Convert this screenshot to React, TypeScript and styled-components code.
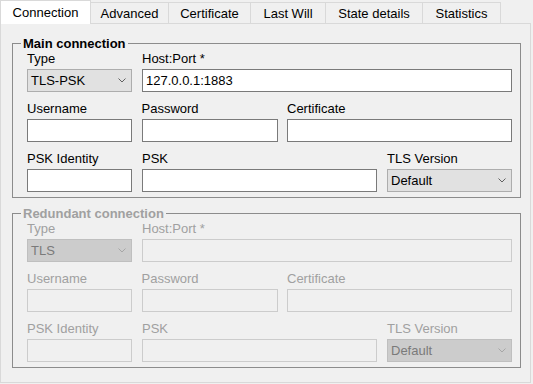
import styled, { createGlobalStyle, css } from 'styled-components';

const Global = createGlobalStyle`
  html, body {
    margin: 0;
    background: #f0f0f0;
  }
  body {
    font-family: "Liberation Sans", Arial, sans-serif;
    font-size: 13px;
    color: #000;
  }
`;

const Window = styled.div`
  width: 533px;
  height: 384px;
  display: flex;
  flex-direction: column;
  box-sizing: border-box;
  padding-bottom: 1px;
`;

const TabStrip = styled.div`
  display: flex;
  align-items: flex-end;
  height: 23px;
`;

const Tab = styled.div<{ $active?: boolean; $w: number }>`
  box-sizing: border-box;
  width: ${(p) => p.$w}px;
  height: 21px;
  padding-top: 2px;
  line-height: 18px;
  text-align: center;
  border: 1px solid #d9d9d9;
  border-bottom: none;
  background: #f0f0f0;
  white-space: nowrap;
  & + & {
    margin-left: -1px;
  }
  ${(p) =>
    p.$active &&
    css`
      height: 24px;
      margin-bottom: -1px;
      padding-top: 3px;
      background: #fff;
      position: relative;
      z-index: 1;
    `}
`;

const Panel = styled.div`
  flex: 1;
  margin-right: 2px;
  border: 1px solid #d9d9d9;
  padding: 12px 9px 0 11px;
  display: flex;
  flex-direction: column;
  gap: 8px;
`;

const GroupBox = styled.fieldset`
  margin: 0;
  min-width: 0;
  padding: 0 8px 5px 14px;
  border: 1px solid #8c8c8c;
`;

const Legend = styled.legend<{ $disabled?: boolean }>`
  margin-left: -6px;
  padding: 0 2px;
  line-height: 15px;
  font-weight: bold;
  color: ${(p) => (p.$disabled ? '#a0a0a0' : '#000')};
`;

const Rows = styled.div`
  display: flex;
  flex-direction: column;
  gap: 9px;
`;

const Row = styled.div`
  display: flex;
  justify-content: space-between;
`;

const Field = styled.div<{ $w: number }>`
  width: ${(p) => p.$w}px;
  display: flex;
  flex-direction: column;
  gap: 3px;
`;

const Label = styled.div<{ $disabled?: boolean }>`
  line-height: 15px;
  white-space: nowrap;
  color: ${(p) => (p.$disabled ? '#a0a0a0' : '#000')};
`;

const TextBox = styled.input`
  box-sizing: border-box;
  width: 100%;
  height: 23px;
  margin: 0;
  padding: 0 3px;
  border: 1px solid #7a7a7a;
  border-radius: 0;
  background: #fff;
  font: inherit;
  color: #000;
  outline: none;
  &:disabled {
    border-color: #cccccc;
    background: #f0f0f0;
  }
`;

const Combo = styled.div<{ $disabled?: boolean }>`
  box-sizing: border-box;
  height: 23px;
  display: flex;
  align-items: center;
  justify-content: space-between;
  padding: 0 5px 0 3px;
  border: 1px solid ${(p) => (p.$disabled ? '#bfbfbf' : '#adadad')};
  background: ${(p) => (p.$disabled ? '#cccccc' : '#e1e1e1')};
  color: ${(p) => (p.$disabled ? '#7a7a7a' : '#000')};
  & svg {
    stroke: ${(p) => (p.$disabled ? '#a6a6a6' : '#606060')};
  }
`;

const Chevron = () => (
  <svg width="8" height="5" viewBox="0 0 8 5" fill="none" strokeWidth="1">
    <polyline points="0.5,0.5 4,4 7.5,0.5" />
  </svg>
);

interface ConnectionProps {
  title: string;
  type: string;
  host?: string;
  disabled?: boolean;
}

const ConnectionGroup = ({ title, type, host = '', disabled }: ConnectionProps) => (
  <GroupBox disabled={disabled}>
    <Legend $disabled={disabled}>{title}</Legend>
    <Rows>
      <Row>
        <Field $w={105}>
          <Label $disabled={disabled}>Type</Label>
          <Combo $disabled={disabled}>
            <span>{type}</span>
            <Chevron />
          </Combo>
        </Field>
        <Field $w={370}>
          <Label $disabled={disabled}>Host:Port *</Label>
          <TextBox defaultValue={host} disabled={disabled} />
        </Field>
      </Row>
      <Row>
        <Field $w={105}>
          <Label $disabled={disabled}>Username</Label>
          <TextBox disabled={disabled} />
        </Field>
        <Field $w={136}>
          <Label $disabled={disabled}>Password</Label>
          <TextBox type="password" disabled={disabled} />
        </Field>
        <Field $w={225}>
          <Label $disabled={disabled}>Certificate</Label>
          <TextBox disabled={disabled} />
        </Field>
      </Row>
      <Row>
        <Field $w={105}>
          <Label $disabled={disabled}>PSK Identity</Label>
          <TextBox disabled={disabled} />
        </Field>
        <Field $w={235}>
          <Label $disabled={disabled}>PSK</Label>
          <TextBox disabled={disabled} />
        </Field>
        <Field $w={125}>
          <Label $disabled={disabled}>TLS Version</Label>
          <Combo $disabled={disabled}>
            <span>Default</span>
            <Chevron />
          </Combo>
        </Field>
      </Row>
    </Rows>
  </GroupBox>
);

const tabs = [
  { label: 'Connection', width: 91 },
  { label: 'Advanced', width: 79 },
  { label: 'Certificate', width: 83 },
  { label: 'Last Will', width: 76 },
  { label: 'State details', width: 98 },
  { label: 'Statistics', width: 79 },
];

export default function App() {
  return (
    <>
      <Global />
      <Window>
        <TabStrip>
          {tabs.map((t, i) => (
            <Tab key={t.label} $w={t.width} $active={i === 0}>
              {t.label}
            </Tab>
          ))}
        </TabStrip>
        <Panel>
          <ConnectionGroup title="Main connection" type="TLS-PSK" host="127.0.0.1:1883" />
          <ConnectionGroup title="Redundant connection" type="TLS" disabled />
        </Panel>
      </Window>
    </>
  );
}
